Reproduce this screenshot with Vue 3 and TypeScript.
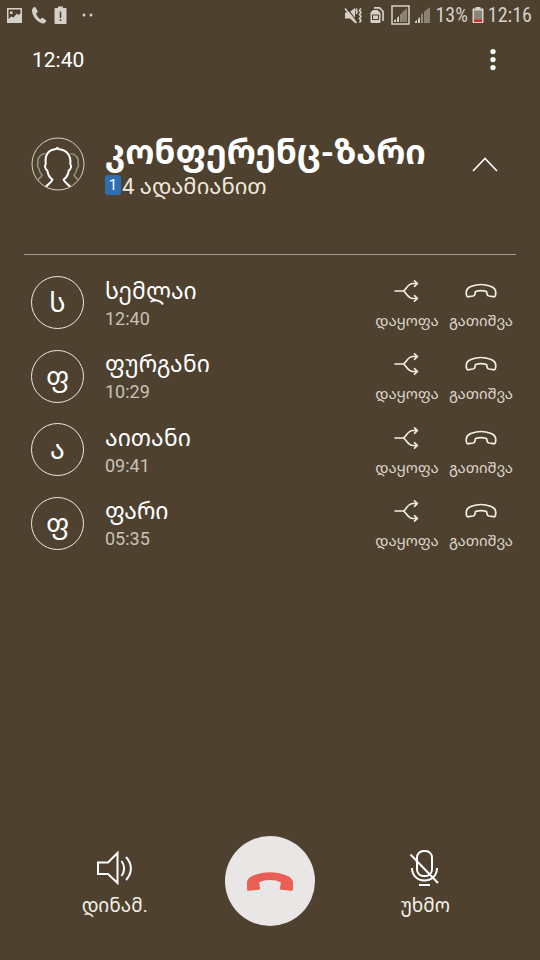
<script setup lang="ts">
import { ref } from 'vue'

interface Participant {
  name: string
  initial: string
  time: string
}

const participants = ref<Participant[]>([
  { name: 'სემლაი', initial: 'ს', time: '12:40' },
  { name: 'ფურგანი', initial: 'ფ', time: '10:29' },
  { name: 'აითანი', initial: 'ა', time: '09:41' },
  { name: 'ფარი', initial: 'ფ', time: '05:35' },
])

const expanded = ref(true)
const speakerOn = ref(false)
const muted = ref(false)

function remove(index: number): void {
  participants.value.splice(index, 1)
}
</script>

<template>
  <div class="screen">
    <div class="status">
      <div class="status-group left">
        <svg class="s-icon" width="18" height="20" viewBox="0 0 18 20">
          <path fill-rule="evenodd" d="M1 3h15v15H1zM2.500 4.500v9.500l3-2.500 2 1 3.500-4 1.500 1.500 2-1.500v-4zM4 6.500h2.500V9H4z" />
        </svg>
        <svg class="s-icon" width="16" height="20" viewBox="0 0 16 20">
          <path d="M2.500 2.500 1 4.500C.5 11 7 18.500 13 18.500l2-2c.5-.6.3-1.200-.2-1.600l-3-2c-.6-.4-1.200-.2-1.600.3l-.9 1.200C7.500 13 5.500 10.500 5 8.500l1.200-1c.5-.4.6-.9.4-1.400L4.800 2.700c-.5-1-1.600-1-2.300-.2z" />
        </svg>
        <svg class="s-icon" width="14" height="20" viewBox="0 0 14 20">
          <path fill-rule="evenodd" d="M4 1.500h5V3h2.500a1 1 0 0 1 1 1v14a1 1 0 0 1-1 1h-10a1 1 0 0 1-1-1V4a1 1 0 0 1 1-1H4zM5.700 6.500v6.500h1.600V6.500zM5.700 14.300v1.700h1.600v-1.700z" />
        </svg>
        <svg class="s-icon dots" width="14" height="20" viewBox="0 0 14 20">
          <circle cx="3" cy="10" r="1.500" /><circle cx="10" cy="10" r="1.500" />
        </svg>
      </div>
      <div class="status-group">
        <svg class="s-icon" width="18" height="20" viewBox="0 0 18 20">
          <path d="M1 7.500h4L11 3v15l-5-4.500H1z" />
          <path d="M2.500 2.500 13 16.500" fill="none" stroke="#4e412f" stroke-width="1.200" />
          <path d="M1 3.500 12.500 18" fill="none" stroke="#d6d0c8" stroke-width="1.600" />
          <path d="m13 3.500-1 1.700 1.200 1.800L12 8.800M17 3.500l-1.500 2L17 7.500l-1.500 2 1.500 2-1.500 2 1.500 2-1.500 2" fill="none" stroke="#d6d0c8" stroke-width="1.600" />
        </svg>
        <svg class="s-icon sim" width="16" height="20" viewBox="0 0 16 20">
          <path fill-rule="evenodd" d="M4 5h4.500L11.500 8v9a1 1 0 0 1-1 1h-8a1 1 0 0 1-1-1V7.500zM3 9.500V15h7V9.500z" />
          <path d="M4 10.500h5V14H4z" />
          <path d="M5 2.800h5.500l3.500 3.500V16" fill="none" stroke="#d6d0c8" stroke-width="1.700" />
        </svg>
        <svg class="s-icon" width="19" height="20" viewBox="0 0 19 20">
          <rect x="1" y="1" width="17" height="18" fill="none" stroke="#d6d0c8" stroke-width="1.500" />
          <path d="M3 17v-1.500L5 14v3zM6 17v-4l2-2v6zM9.500 17V9.500l1-1V17z" />
          <path d="M11 17V7.500L16 3v14z" opacity=".45" />
        </svg>
        <svg class="s-icon" width="17" height="20" viewBox="0 0 17 20">
          <path d="M1 18v-1.500L3 15v3zM4 18v-4l2-2v6zM7.500 18V9.500l1-1V18z" />
          <path d="M10 18V7l6-5v16z" opacity=".45" />
        </svg>
        <span class="battery-text">13%</span>
        <svg class="s-icon battery" width="12" height="20" viewBox="0 0 12 20">
          <path d="M3.500 2h5v1.500h3V18H.5V3.500h3z" />
          <path d="M2 5.500h8V15H2z" fill="#8d857a" /><path d="M2 14.500h8V17H2z" fill="#c9302b" />
        </svg>
        <span class="clock">12:16</span>
      </div>
    </div>

    <div class="toolbar">
      <span class="timer">12:40</span>
      <button class="icon-button" type="button" aria-label="მენიუ">
        <svg width="8" height="24" viewBox="0 0 8 24" fill="#fff">
          <circle cx="4" cy="3.500" r="2.600" /><circle cx="4" cy="11.500" r="2.600" /><circle cx="4" cy="19.500" r="2.600" />
        </svg>
      </button>
    </div>

    <header class="conference">
      <svg class="group-avatar" width="54" height="54" viewBox="0 0 54 54" fill="none">
        <circle cx="27" cy="27" r="26" stroke="#d8d0c4" />
        <path d="M14.500 16.500c-5 .5-8.500 4-7.500 10-1 1-.5 4 1 5 .3 3 1.500 5 3 6.500-.5 2-2 3-4 4.500M39.500 16.500c5 .5 8.500 4 7.500 10 1 1 .5 4-1 5-.3 3-1.500 5-3 6.500.5 2 2 3 4 4.500" stroke="#988d7d" stroke-width="1.700" />
        <path d="M15 49.500c2.500-2.500 5.500-4 6.500-7-2.500-1.500-4.500-4.500-5.200-9-2-1-3-4.500-1.500-6.500C13.500 18.500 17 13 24 12.300c1-.2 1.700-.8 2.500-1.500.3.800.8 1.300 1.800 1.500 7.200.7 12 6 11 14.700 1.500 2 .5 5.500-1.500 6.500-.7 4.500-2.700 7.500-5.300 9 1 3 4 4.500 6.500 7" stroke="#fff" stroke-width="2" stroke-linejoin="round" />
      </svg>
      <div class="conference-text">
        <h1>კონფერენც-ზარი</h1>
        <p class="count">
          <span class="sim-badge">1</span>
          <span>4 ადამიანით</span>
        </p>
      </div>
      <button class="icon-button" type="button" aria-label="სია" :aria-expanded="expanded" @click="expanded = !expanded">
        <svg width="26" height="16" viewBox="0 0 26 16" fill="none" stroke="#fff" stroke-width="1.600">
          <path d="M1 15 13 2.500 25 15" />
        </svg>
      </button>
    </header>

    <ul v-if="expanded" class="people">
      <li v-for="(person, index) in participants" :key="person.name" class="person">
        <span class="avatar">{{ person.initial }}</span>
        <div class="details">
          <span class="name">{{ person.name }}</span>
          <span class="time">{{ person.time }}</span>
        </div>
        <button class="action" type="button">
          <svg width="32" height="24" viewBox="0 0 32 24" fill="none" stroke="#f4efe6" stroke-width="1.600" stroke-linecap="round" stroke-linejoin="round">
            <path d="M4 12h8.500c3-1.500 4-7.500 9.500-7.500h4M12.500 12c3 1.500 4 7.500 9.500 7.500h4M23.500 1.800l3 2.700-3 2.800M23.500 16.700l3 2.800-3 2.700" />
          </svg>
          <span>დაყოფა</span>
        </button>
        <button class="action" type="button" @click="remove(index)">
          <svg width="32" height="24" viewBox="0 0 32 24" fill="none" stroke="#f4efe6" stroke-width="1.700" stroke-linejoin="round">
            <path d="M1.500 16c-1.200-6 2-7.500 5-8.700 6-2.300 13-2.300 19 0 3 1.200 6.200 2.700 5 8.700-.2 1.500-1 2-2.300 1.700l-4.200-.7c-1.500-.3-1.800-.8-2-2.200l-.5-2.300c-3.500-1-7.500-1-11 0L10 14.800c-.2 1.400-.5 1.900-2 2.200l-4.200.7C2.500 18 1.700 17.500 1.500 16z" />
          </svg>
          <span>გათიშვა</span>
        </button>
      </li>
    </ul>

    <footer class="controls">
      <button class="control" type="button" :aria-pressed="speakerOn" @click="speakerOn = !speakerOn">
        <svg width="40" height="40" viewBox="0 0 40 40" fill="none" stroke="#fff" stroke-width="2">
          <path d="M3 14.500h10L22.500 5v30L13 26H3z" />
          <path d="M26.500 13c3.500 4.500 3.500 10.500 0 15M31 9c6.500 7 6.500 16 0 23" />
        </svg>
        <span>დინამ.</span>
      </button>
      <button class="hangup" type="button" aria-label="გათიშვა">
        <svg width="48" height="24" viewBox="0 0 48 24" fill="#ea5f55">
          <path d="M1 20v-7C2 9 5 7.500 8 6.300c10-4.200 22-4.200 32 0 3 1.200 6 2.700 7 6.700v7c0 1.600-.8 2-2.300 1.800l-9.200-1c-1.300-.2-1.800-1-1.500-2.300l1-5c-6-3.300-16-3.300-22 0l1 5c.3 1.300-.2 2.100-1.500 2.300l-9.200 1C1.800 22 1 21.600 1 20z" />
        </svg>
      </button>
      <button class="control" type="button" :aria-pressed="muted" @click="muted = !muted">
        <svg width="40" height="40" viewBox="0 0 40 40" fill="none" stroke="#fff" stroke-width="2">
          <rect x="12" y="3" width="15" height="25" rx="6.500" />
          <path d="M7 20c0 7 5 12.500 12.500 12.500S32 27 32 20M14 37h11" />
          <path d="M5.500 6.500 33 35" />
        </svg>
        <span>უხმო</span>
      </button>
    </footer>
  </div>
</template>

<style>
body {
  background: #4e412f;
}
</style>

<style scoped>
.screen {
  display: flex;
  flex-direction: column;
  box-sizing: border-box;
  min-height: 100vh;
  padding-bottom: 34px;
  background: #4e412f;
  color: #fff;
  font-family: Roboto, "Noto Sans Georgian", "DejaVu Sans", sans-serif;
}

button {
  padding: 0;
  border: 0;
  background: none;
  color: inherit;
  font: inherit;
  cursor: pointer;
}

svg {
  display: block;
  flex: none;
}

.status {
  display: flex;
  justify-content: space-between;
  align-items: center;
  height: 30px;
  padding: 0 8px 0 6px;
  color: #d6d0c8;
  font-size: 20px;
  line-height: 32px;
}

.status-group {
  display: flex;
  align-items: center;
  gap: 4px;
}

.left {
  gap: 7px;
}

.dots {
  margin-left: 6px;
}

.s-icon {
  fill: #d6d0c8;
}

.sim {
  margin: 0 2px 0 3px;
}

.battery-text,
.clock {
  font-family: "Roboto Condensed", Roboto, sans-serif;
}

.toolbar {
  display: flex;
  justify-content: space-between;
  align-items: center;
  height: 60px;
  padding: 0 32px;
}

.timer {
  font-size: 21px;
}

.icon-button {
  display: grid;
  place-items: center;
  width: 32px;
  height: 32px;
}

.toolbar .icon-button {
  margin-right: -1px;
}

.conference {
  display: flex;
  align-items: center;
  box-sizing: border-box;
  height: 165px;
  margin: 0 24px;
  padding: 0 15px 16px 7px;
  border-bottom: 1px solid #a29b90;
}

.conference-text {
  flex: 1;
  min-width: 0;
  padding: 6px 0 0 20px;
}

h1 {
  margin: 0;
  font-size: 34px;
  font-weight: 700;
  line-height: 40px;
  white-space: nowrap;
}

.count {
  display: flex;
  align-items: center;
  margin: 0;
  color: #f0e9dd;
  font-size: 22px;
  line-height: 30px;
  white-space: nowrap;
}

.sim-badge {
  width: 16px;
  height: 20px;
  margin: 0 1px 4px 0;
  border-radius: 3px;
  background: #2f6fb0;
  color: #fff;
  font-size: 15px;
  line-height: 20px;
  text-align: center;
}

.people {
  display: grid;
  grid-auto-rows: 1fr;
  height: 294px;
  margin: 11px 0 0;
  padding: 0 24px 0 31px;
  list-style: none;
}

.person {
  display: flex;
  align-items: center;
}

.avatar {
  box-sizing: border-box;
  width: 53px;
  height: 53px;
  border: 1px solid #f0e9dd;
  border-radius: 50%;
  font-size: 27px;
  line-height: 53px;
  text-align: center;
}

.details {
  display: flex;
  flex: 1;
  flex-direction: column;
  min-width: 0;
  padding: 4px 0 0 21px;
}

.name {
  font-size: 23px;
  line-height: 28px;
}

.time {
  color: #c9c1b5;
  font-size: 18px;
  line-height: 26px;
}

.action {
  display: flex;
  flex-direction: column;
  align-items: center;
  gap: 6px;
  width: 74px;
  padding-top: 6px;
  color: #dcd5c9;
  font-size: 15px;
  line-height: 24px;
  white-space: nowrap;
}

.action + .action {
  margin-right: -2px;
}

.controls {
  display: grid;
  grid-template-columns: repeat(3, 1fr);
  justify-items: center;
  align-items: center;
  margin-top: auto;
  padding: 0 37px;
}

.control {
  display: flex;
  flex-direction: column;
  align-items: center;
  gap: 4px;
  padding-top: 6px;
  color: #f4efe6;
  font-size: 19px;
  line-height: 28px;
}

.hangup {
  display: grid;
  place-items: center;
  width: 90px;
  height: 90px;
  border-radius: 50%;
  background: #e9e7e5;
}
</style>
